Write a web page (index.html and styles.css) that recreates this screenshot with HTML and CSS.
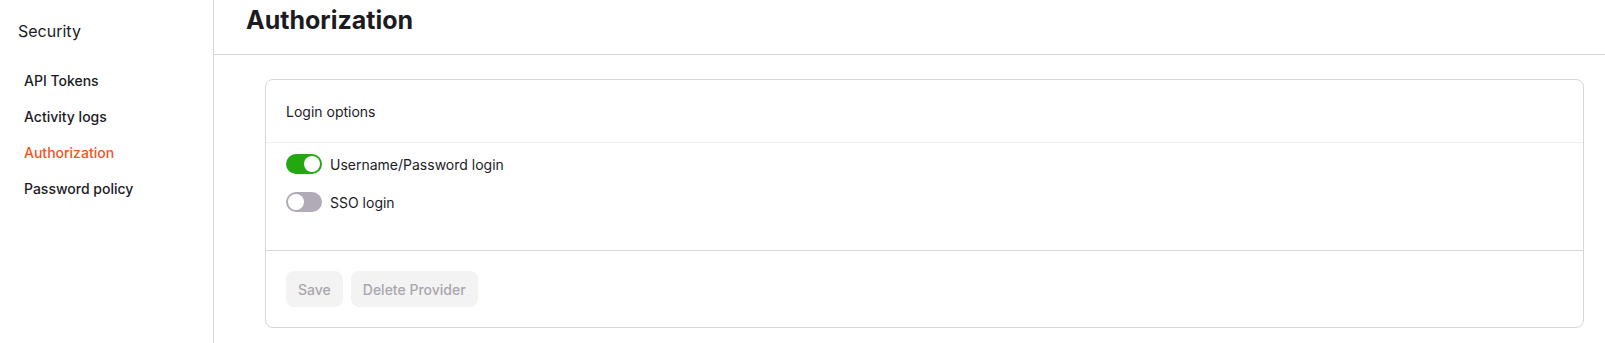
FILE: index.html
```html
<!DOCTYPE html>
<html>
<head>
<meta charset="utf-8">
<link rel="stylesheet" href="styles.css">
</head>
<body>
<div class="app">
  <aside class="sidebar">
    <div class="sidebar-title">Security</div>
    <nav class="nav">
      <a class="nav-item">API Tokens</a>
      <a class="nav-item">Activity logs</a>
      <a class="nav-item active">Authorization</a>
      <a class="nav-item">Password policy</a>
    </nav>
  </aside>
  <main class="main">
    <header class="page-header">
      <h1 class="page-title">Authorization</h1>
    </header>
    <section class="content">
      <div class="card">
        <div class="card-header">Login options</div>
        <div class="card-body">
          <label class="option">
            <span class="toggle on"><span class="knob"></span></span>
            <span class="option-label">Username/Password login</span>
          </label>
          <label class="option">
            <span class="toggle"><span class="knob"></span></span>
            <span class="option-label">SSO login</span>
          </label>
        </div>
        <div class="card-footer">
          <button class="btn">Save</button>
          <button class="btn">Delete Provider</button>
        </div>
      </div>
    </section>
  </main>
</div>
</body>
</html>
```
FILE: styles.css
```css
* { box-sizing: border-box; }
html, body { margin: 0; padding: 0; background: #fff; }
body {
  font-family: Inter, "Noto Sans", sans-serif;
  color: #1c1b1f;
  width: 1605px;
  height: 343px;
  overflow: hidden;
}
.app { display: flex; height: 343px; }
.sidebar {
  width: 214px;
  flex: none;
  border-right: 1px solid #d6d6d6;
  padding: 20px 0 0 18px;
}
.sidebar-title {
  font-size: 16px;
  line-height: 22px;
  font-weight: 400;
  height: 22px;
}
.nav { display: flex; flex-direction: column; margin-top: 21px; padding-left: 6px; }
.nav-item {
  font-size: 14px;
  font-weight: 500;
  line-height: 20px;
  height: 36px;
  display: flex;
  align-items: center;
  color: #1c1b1f;
}
.nav-item.active { color: #f2551d; }
.main { flex: 1; display: flex; flex-direction: column; }
.page-header {
  height: 55px;
  border-bottom: 1px solid #d6d6d6;
  padding-left: 32px;
}
.page-title {
  margin: 0;
  font-size: 25px;
  line-height: 40px;
  font-weight: 700;
}
.content { padding: 24px 21px 0 51px; }
.card {
  border: 1px solid #d6d6d6;
  border-radius: 8px;
}
.card-header {
  height: 63px;
  padding: 0 20px;
  display: flex;
  align-items: center;
  font-size: 14px;
  border-bottom: 1px solid #f0f0f0;
}
.card-body {
  padding: 11px 20px 38px;
  display: flex;
  flex-direction: column;
  gap: 18px;
  border-bottom: 1px solid #d6d6d6;
}
.option { display: flex; align-items: center; gap: 8px; height: 20px; }
.option-label { font-size: 14px; }
.toggle {
  width: 36px;
  height: 20px;
  border-radius: 10px;
  background: #b0abb6;
  padding: 2px;
  display: flex;
}
.toggle.on { background: #23a812; justify-content: flex-end; }
.knob { width: 16px; height: 16px; border-radius: 50%; background: #fff; }
.card-footer {
  padding: 20px;
  display: flex;
  gap: 8px;
}
.btn {
  font-family: inherit;
  font-size: 14px;
  font-weight: 500;
  height: 36px;
  padding: 0 12px;
  border: none;
  border-radius: 8px;
  background: #f3f3f3;
  color: #aaa6ae;
}
```
